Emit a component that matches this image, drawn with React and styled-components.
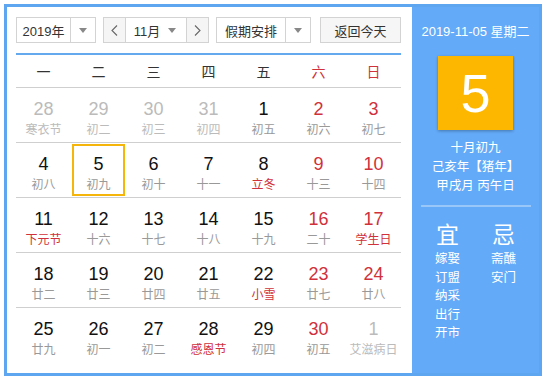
import styled, { createGlobalStyle } from "styled-components";

const GlobalStyle = createGlobalStyle`
  body {
    margin: 0;
    background: #fff;
    font-family: "Liberation Sans", "Noto Sans CJK SC", sans-serif;
  }
`;

const RED = "#d0313a";

const weeks = [
  [
    ["28", "寒衣节", "fade"], ["29", "初二", "fade"], ["30", "初三", "fade"], ["31", "初四", "fade"],
    ["1", "初五"], ["2", "初六", "red"], ["3", "初七", "red"],
  ],
  [
    ["4", "初八"], ["5", "初九", "", true], ["6", "初十"], ["7", "十一"],
    ["8", "立冬", "", false, true], ["9", "十三", "red"], ["10", "十四", "red"],
  ],
  [
    ["11", "下元节", "", false, true], ["12", "十六"], ["13", "十七"], ["14", "十八"],
    ["15", "十九"], ["16", "二十", "red"], ["17", "学生日", "red", false, true],
  ],
  [
    ["18", "廿二"], ["19", "廿三"], ["20", "廿四"], ["21", "廿五"],
    ["22", "小雪", "", false, true], ["23", "廿七", "red"], ["24", "廿八", "red"],
  ],
  [
    ["25", "廿九"], ["26", "初一"], ["27", "初二"], ["28", "感恩节", "", false, true],
    ["29", "初四"], ["30", "初五", "red"], ["1", "艾滋病日", "fade"],
  ],
];

const weekdays = ["一", "二", "三", "四", "五", "六", "日"];

function Caret() {
  return (
    <svg width="8" height="5" viewBox="0 0 8 5">
      <path d="M0 0h8L4 5z" fill="#888" />
    </svg>
  );
}

function Chevron({ dir }) {
  return (
    <svg width="7" height="11" viewBox="0 0 7 11">
      <path
        d={dir === "left" ? "M6 0.5L1 5.5L6 10.5" : "M1 0.5L6 5.5L1 10.5"}
        stroke="#666"
        strokeWidth="1.1"
        fill="none"
      />
    </svg>
  );
}

function App() {
  return (
    <>
      <GlobalStyle />
      <Frame>
        <Left>
          <Toolbar>
            <Select $w={80}>
              <SelectText>2019年</SelectText>
              <CaretBox><Caret /></CaretBox>
            </Select>
            <MonthGroup>
              <ArrowBtn><Chevron dir="left" /></ArrowBtn>
              <MonthMid>
                <SelectText>11月</SelectText>
                <Caret />
              </MonthMid>
              <ArrowBtn $right><Chevron dir="right" /></ArrowBtn>
            </MonthGroup>
            <Select $w={95}>
              <SelectText>假期安排</SelectText>
              <CaretBox><Caret /></CaretBox>
            </Select>
            <TodayBtn>返回今天</TodayBtn>
          </Toolbar>
          <Grid>
            <HeadRow>
              {weekdays.map((w, i) => (
                <HeadCell key={w} $red={i >= 5}>{w}</HeadCell>
              ))}
            </HeadRow>
            {weeks.map((week, r) => (
              <Row key={r} $last={r === weeks.length - 1}>
                {week.map(([d, l, tone, sel, fest], i) => (
                  <Cell key={i} $selected={sel}>
                    <DateNum $tone={tone}>{d}</DateNum>
                    <Lunar $tone={tone} $fest={fest}>{l}</Lunar>
                  </Cell>
                ))}
              </Row>
            ))}
          </Grid>
        </Left>
        <Side>
          <SideDate>2019-11-05 星期二</SideDate>
          <DayBox>5</DayBox>
          <LunarInfo>
            <div>十月初九</div>
            <div>己亥年【猪年】</div>
            <div>甲戌月 丙午日</div>
          </LunarInfo>
          <Divider />
          <Advice>
            <AdviceCol>
              <AdviceTitle>宜</AdviceTitle>
              <AdviceItem>嫁娶</AdviceItem>
              <AdviceItem>订盟</AdviceItem>
              <AdviceItem>纳采</AdviceItem>
              <AdviceItem>出行</AdviceItem>
              <AdviceItem>开市</AdviceItem>
            </AdviceCol>
            <AdviceCol>
              <AdviceTitle>忌</AdviceTitle>
              <AdviceItem>斋醮</AdviceItem>
              <AdviceItem>安门</AdviceItem>
            </AdviceCol>
          </Advice>
        </Side>
      </Frame>
    </>
  );
}

export default App;

const Frame = styled.div`
  margin: 4px;
  width: 532px;
  height: 366px;
  border: 3px solid #5ea6ef;
  display: flex;
`;

const Left = styled.div`
  width: 385px;
  padding: 10px 11px 0 9px;
  display: flex;
  flex-direction: column;
`;

const Toolbar = styled.div`
  display: flex;
  align-items: center;
  height: 26px;
  padding-bottom: 10px;
  border-bottom: 2px solid #64a9ee;
`;

const Select = styled.div`
  box-sizing: border-box;
  width: ${(p) => p.$w}px;
  height: 26px;
  border: 1px solid #d3d3d3;
  display: flex;
  align-items: center;
  margin-right: 7px;
  background: #fff;
`;

const SelectText = styled.span`
  flex: 1;
  text-align: center;
  font-size: 13px;
  color: #333;
`;

const CaretBox = styled.span`
  width: 24px;
  height: 24px;
  border-left: 1px solid #d3d3d3;
  display: flex;
  align-items: center;
  justify-content: center;
`;

const MonthGroup = styled.div`
  box-sizing: border-box;
  width: 106px;
  height: 26px;
  border: 1px solid #d3d3d3;
  display: flex;
  margin-right: 7px;
`;

const ArrowBtn = styled.span`
  width: 21px;
  display: flex;
  align-items: center;
  justify-content: center;
  background: #f5f5f5;
  border-right: ${(p) => (p.$right ? "none" : "1px solid #d3d3d3")};
  border-left: ${(p) => (p.$right ? "1px solid #d3d3d3" : "none")};
`;

const MonthMid = styled.span`
  flex: 1;
  display: flex;
  align-items: center;
  padding: 0 10px 0 4px;
  gap: 4px;
`;

const TodayBtn = styled.div`
  box-sizing: border-box;
  margin-left: auto;
  width: 81px;
  height: 26px;
  border: 1px solid #d3d3d3;
  background: #f6f6f6;
  font-size: 13px;
  color: #333;
  display: flex;
  align-items: center;
  justify-content: center;
`;

const Grid = styled.div`
  display: flex;
  flex-direction: column;
`;

const HeadRow = styled.div`
  display: grid;
  grid-template-columns: repeat(7, 55px);
  height: 32px;
  border-bottom: 1px solid #cfcfcf;
  align-items: center;
`;

const HeadCell = styled.div`
  text-align: center;
  font-size: 14px;
  color: ${(p) => (p.$red ? RED : "#333")};
`;

const Row = styled.div`
  display: grid;
  grid-template-columns: repeat(7, 55px);
  height: 54px;
  border-bottom: ${(p) => (p.$last ? "none" : "1px solid #cfcfcf")};
`;

const Cell = styled.div`
  box-sizing: border-box;
  margin: 1px;
  border: 2px solid ${(p) => (p.$selected ? "#f5b50a" : "transparent")};
  display: flex;
  flex-direction: column;
  align-items: center;
  padding-top: 8px;
`;

const toneColor = (tone, fallback) =>
  tone === "fade" ? "#bbb" : tone === "red" ? RED : fallback;

const DateNum = styled.div`
  font-size: 18px;
  line-height: 20px;
  color: ${(p) => toneColor(p.$tone, "#111")};
`;

const Lunar = styled.div`
  font-size: 12px;
  line-height: 16px;
  margin-top: 3px;
  color: ${(p) => (p.$tone === "fade" ? "#bbb" : p.$fest ? RED : "#999")};
`;

const Side = styled.div`
  flex: 1;
  background: #63aaf8;
  color: #fff;
  display: flex;
  flex-direction: column;
  align-items: center;
  padding-top: 16px;
`;

const SideDate = styled.div`
  font-size: 13px;
  line-height: 18px;
`;

const DayBox = styled.div`
  margin-top: 15px;
  width: 75px;
  height: 74px;
  background: #fdb700;
  box-shadow: 0 1px 3px rgba(0, 0, 0, 0.3);
  display: flex;
  align-items: center;
  justify-content: center;
  font-size: 54px;
  color: #fff;
`;

const LunarInfo = styled.div`
  margin-top: 9px;
  text-align: center;
  font-size: 12.5px;
  line-height: 19px;
`;

const Divider = styled.div`
  margin-top: 9px;
  width: 110px;
  height: 2px;
  background: rgba(255, 255, 255, 0.35);
`;

const Advice = styled.div`
  display: flex;
  gap: 31px;
  margin-top: 14px;
`;

const AdviceCol = styled.div`
  display: flex;
  flex-direction: column;
  align-items: center;
`;

const AdviceTitle = styled.div`
  font-size: 23px;
  line-height: 28px;
  margin-bottom: 1px;
`;

const AdviceItem = styled.div`
  font-size: 12.5px;
  line-height: 18.5px;
`;
